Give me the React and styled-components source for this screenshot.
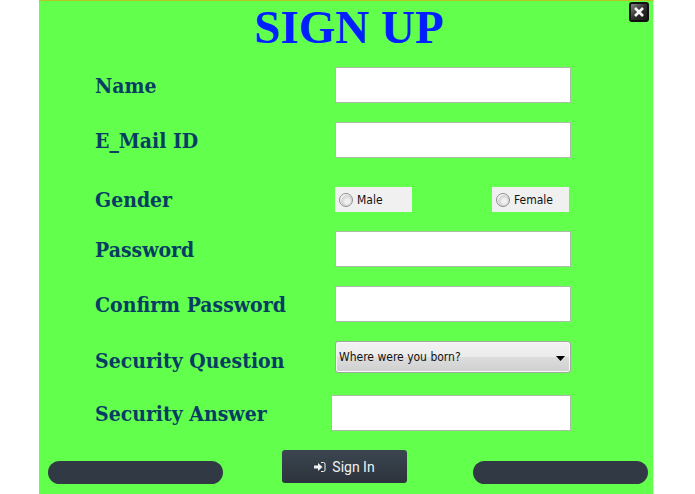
import React from "react";
import styled, { createGlobalStyle } from "styled-components";

const GlobalStyle = createGlobalStyle`
  * { box-sizing: border-box; }
  body { margin: 0; background: #ffffff; font-family: "Open Sans", "Noto Sans", sans-serif; }
`;

const Panel = styled.main`
  position: relative;
  display: flex;
  flex-direction: column;
  min-height: 100vh;
  margin: 0 41px 0 39px;
  padding-bottom: 10px;
  background: #63ff4d;
  border-top: 1px solid #b9c520;
  border-right: 1px solid #dcefd8;
`;

const Title = styled.h1`
  margin: 0;
  padding-left: 6px;
  height: 66px;
  font: bold 47px/52px "Castellar", "Liberation Serif", serif;
  color: #0020ff;
  text-align: center;
`;

const CloseButton = styled.button`
  position: absolute;
  top: 1px;
  right: 4px;
  display: flex;
  align-items: center;
  justify-content: center;
  width: 20px;
  height: 20px;
  padding: 0;
  border: 2px solid #101010;
  border-radius: 3px;
  background: linear-gradient(135deg, #858585, #303030 50%, #161616);
`;

const Form = styled.form`
  flex: 1;
  display: flex;
  flex-direction: column;
  justify-content: space-between;
`;

const Fields = styled.div`
  display: flex;
  flex-direction: column;
  gap: 19px;
  padding: 0 82px 0 56px;
`;

const Row = styled.div`
  display: grid;
  grid-template-columns: 240px 1fr;
  align-items: ${({ $align }) => $align || "center"};
  padding-top: ${({ $lead }) => $lead || 0}px;
`;

const labelText = `
  font: bold 21px/25px "Jokerman", "DejaVu Serif Condensed", "DejaVu Serif", serif;
  color: #073d62;
  white-space: nowrap;
`;

const Label = styled.label`${labelText}`;
const GroupLabel = styled.span`${labelText}`;

const TextInput = styled.input`
  width: auto;
  min-width: 0;
  height: 36px;
  margin-left: ${({ $wide }) => ($wide ? "-4px" : "0")};
  padding: 0 6px;
  border: 1px solid #a9bfa5;
  border-radius: 0;
  background: #ffffff;
  font: 12px "Open Sans", sans-serif;
`;

const Choices = styled.div`
  display: flex;
  justify-content: space-between;
  padding-right: 2px;
`;

const Choice = styled.label`
  display: flex;
  align-items: center;
  gap: 4px;
  width: 77px;
  height: 25px;
  padding-left: 4px;
  background: #f0f0f0;
  color: #111111;
  font: 12px/16px "DejaVu Sans Condensed", "DejaVu Sans", sans-serif;
`;

const Radio = styled.input`
  appearance: none;
  width: 14px;
  height: 14px;
  margin: 0;
  border: 1px solid #8e8f8f;
  border-radius: 50%;
  background: radial-gradient(circle at 60% 60%, #f0f0f0 0 20%, #cfd1d3 55%, #f4f4f4 62%);
  &:checked { background: radial-gradient(circle, #24435c 0 35%, #f4f4f4 45%); }
`;

const SelectBox = styled.div`
  position: relative;
  display: grid;
`;

const Select = styled.select`
  appearance: none;
  height: 32px;
  padding: 0 24px 0 3px;
  border: 1px solid #a0a8a0;
  border-radius: 3px;
  box-shadow: inset 0 0 0 1px #f8f8f8;
  background: linear-gradient(#f2f2f2, #ebebeb 49%, #dddddd 50%, #cfcfcf);
  color: #111111;
  font: 12px "DejaVu Sans Condensed", "DejaVu Sans", sans-serif;
`;

const Arrow = styled.svg`
  position: absolute;
  right: 6px;
  top: 15px;
  pointer-events: none;
`;

const Footer = styled.footer`
  display: grid;
  grid-template-columns: 175fr 59fr 125fr 66fr 175fr;
  align-items: end;
  padding: 0 5px 0 9px;
`;

const Bar = styled.div`
  grid-column: ${({ $column }) => $column};
  height: 23px;
  border-radius: 12px;
  background: #313a44;
`;

const SubmitButton = styled.button`
  grid-column: 3;
  display: flex;
  align-items: center;
  justify-content: center;
  gap: 6px;
  height: 33px;
  margin-bottom: 1px;
  padding: 0;
  border: 0;
  border-radius: 3px;
  background: linear-gradient(#3b4650, #2c333c);
  color: #eef0f2;
  font: 14px/18px Roboto, sans-serif;
`;

function SignInIcon() {
  return (
    <svg width="12" height="12" viewBox="0 0 12 12" aria-hidden="true">
      <path d="M0 4.500h4V2l4.500 4L4 10V7.500H0z" fill="currentColor" />
      <path d="M7 1.500h2.500a1.500 1.500 0 0 1 1.500 1.500v6a1.500 1.500 0 0 1-1.500 1.500H7" fill="none" stroke="currentColor" strokeWidth="1" />
    </svg>
  );
}

function TextRow({ id, label, type = "text", lead, wide }) {
  return (
    <Row $lead={lead}>
      <Label htmlFor={id}>{label}</Label>
      <TextInput id={id} name={id} type={type} $wide={wide} />
    </Row>
  );
}

export default function App() {
  return (
    <>
      <GlobalStyle />
      <Panel>
        <Title>SIGN UP</Title>
        <CloseButton type="button" aria-label="Close">
          <svg width="12" height="12" viewBox="0 0 12 12">
            <path d="M2 2 10 10M10 2 2 10" stroke="#f5f5f5" strokeWidth="2.6" />
          </svg>
        </CloseButton>
        <Form onSubmit={(e) => e.preventDefault()}>
          <Fields>
            <TextRow id="name" label="Name" />
            <TextRow id="email" label="E_Mail ID" />
            <Row $lead={10} role="radiogroup" aria-labelledby="gender">
              <GroupLabel id="gender">Gender</GroupLabel>
              <Choices>
                <Choice><Radio type="radio" name="gender" value="male" />Male</Choice>
                <Choice><Radio type="radio" name="gender" value="female" />Female</Choice>
              </Choices>
            </Row>
            <TextRow id="password" label="Password" type="password" />
            <TextRow id="confirm" label="Confirm Password" type="password" />
            <Row $align="end">
              <Label htmlFor="question">Security Question</Label>
              <SelectBox>
                <Select id="question" defaultValue="born">
                  <option value="born">Where were you born?</option>
                </Select>
                <Arrow width="9" height="5" viewBox="0 0 9 5">
                  <path d="M0 0h9L4.500 5z" fill="#000000" />
                </Arrow>
              </SelectBox>
            </Row>
            <TextRow id="answer" label="Security Answer" lead={3} wide />
          </Fields>
          <Footer>
            <Bar $column={1} />
            <SubmitButton type="submit"><SignInIcon />Sign In</SubmitButton>
            <Bar $column={5} />
          </Footer>
        </Form>
      </Panel>
    </>
  );
}
